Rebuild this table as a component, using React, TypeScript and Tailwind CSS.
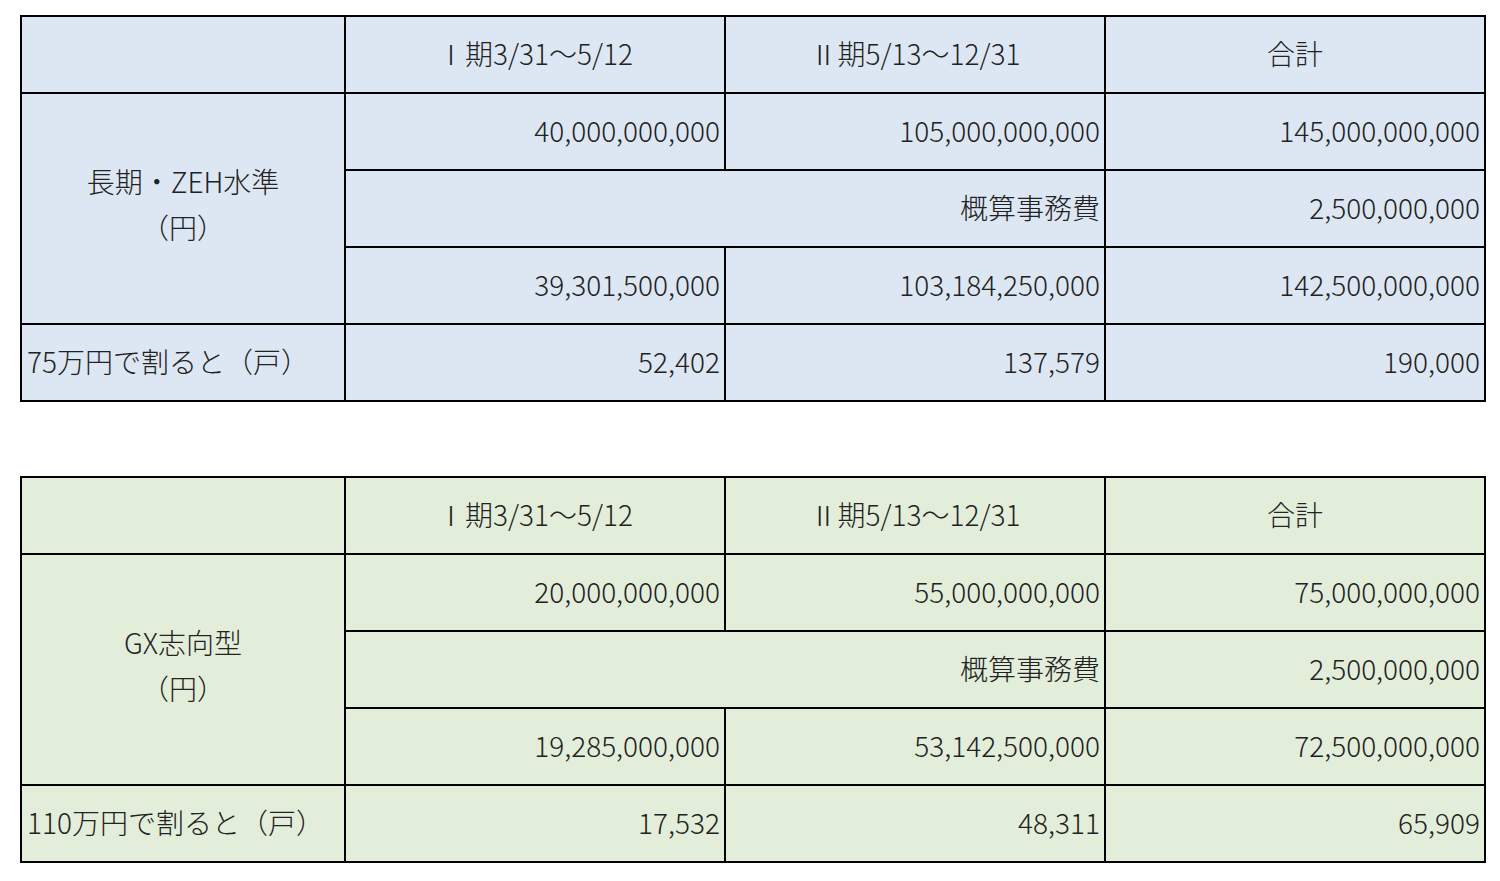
const tables = [
  {
    bg: "bg-[#dde7f3]",
    label: ["長期・ZEH水準", "（円）"],
    rows: [
      ["40,000,000,000", "105,000,000,000", "145,000,000,000"],
      ["2,500,000,000"],
      ["39,301,500,000", "103,184,250,000", "142,500,000,000"],
    ],
    divide: ["75万円で割ると（戸）", "52,402", "137,579", "190,000"],
  },
  {
    bg: "bg-[#e2eeda]",
    label: ["GX志向型", "（円）"],
    rows: [
      ["20,000,000,000", "55,000,000,000", "75,000,000,000"],
      ["2,500,000,000"],
      ["19,285,000,000", "53,142,500,000", "72,500,000,000"],
    ],
    divide: ["110万円で割ると（戸）", "17,532", "48,311", "65,909"],
  },
];

const cell = "border-2 border-black h-[77px] p-0 pb-[4px] align-middle";
const num = `${cell} text-right pr-[4px]`;

function BudgetTable({ t }: { t: (typeof tables)[number] }) {
  return (
    <table className={`border-collapse border-2 border-black ${t.bg} table-fixed w-[1464px]`}>
      <colgroup>
        <col className="w-[324px]" />
        <col className="w-[380px]" />
        <col className="w-[380px]" />
        <col className="w-[380px]" />
      </colgroup>
      <tbody>
        <tr>
          <td className={cell} />
          <td className={`${cell} text-center`}>Ⅰ期3/31～5/12</td>
          <td className={`${cell} text-center`}>Ⅱ期5/13～12/31</td>
          <td className={`${cell} text-center`}>合計</td>
        </tr>
        <tr>
          <td rowSpan={3} className={`${cell} text-center leading-[46px]`}>
            <div className="-mt-[6px]">{t.label[0]}</div>
            <div>{t.label[1]}</div>
          </td>
          {t.rows[0].map((v) => (
            <td key={v} className={num}>{v}</td>
          ))}
        </tr>
        <tr>
          <td colSpan={2} className={num}>概算事務費</td>
          <td className={num}>{t.rows[1][0]}</td>
        </tr>
        <tr>
          {t.rows[2].map((v) => (
            <td key={v} className={num}>{v}</td>
          ))}
        </tr>
        <tr>
          <td className={`${cell} text-left pl-[5px]`}>{t.divide[0]}</td>
          {t.divide.slice(1).map((v) => (
            <td key={v} className={num}>{v}</td>
          ))}
        </tr>
      </tbody>
    </table>
  );
}

export default function App() {
  return (
    <div className="min-h-[881px] w-[1500px] bg-white pt-[15px] pl-[20px] text-[28px] font-light text-[#222222] font-['Noto_Sans_CJK_JP','Noto_Sans',sans-serif] flex flex-col gap-[74px]">
      {tables.map((t) => (
        <BudgetTable key={t.label[0]} t={t} />
      ))}
    </div>
  );
}
